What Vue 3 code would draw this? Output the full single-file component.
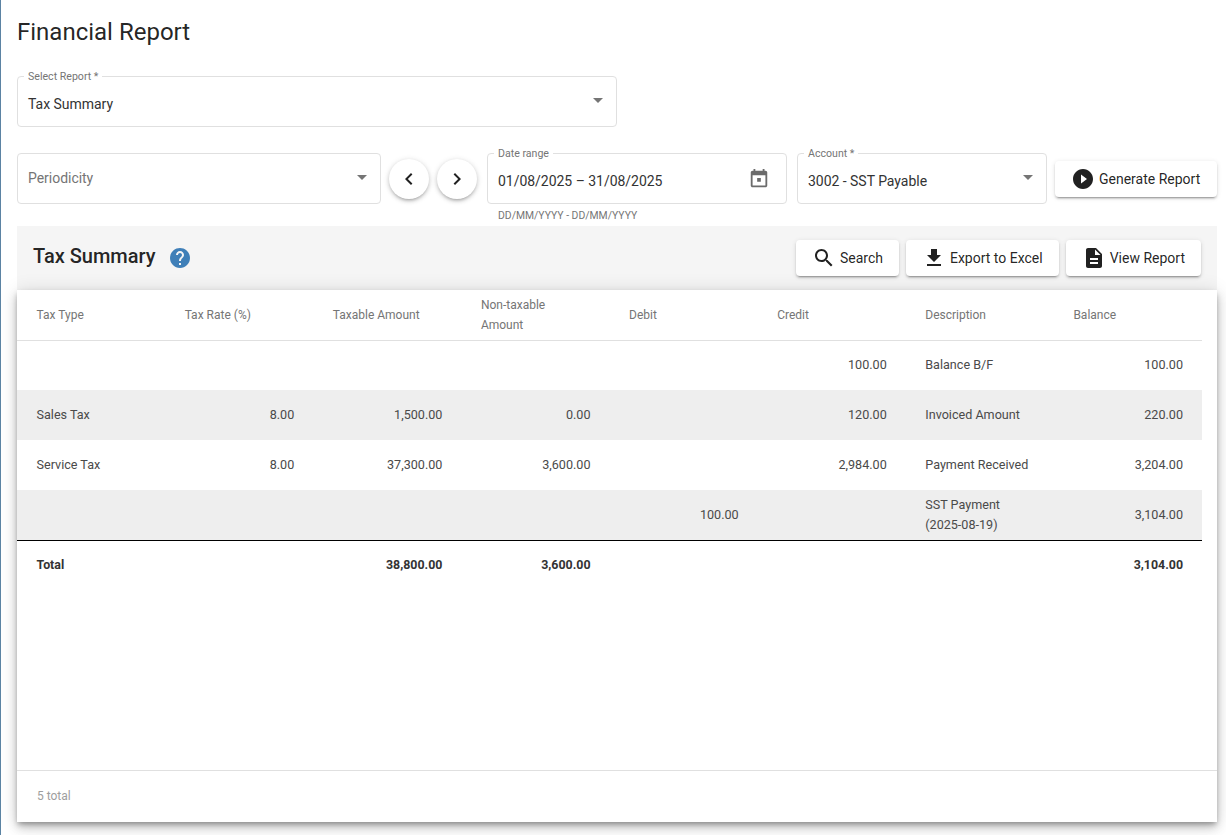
<script setup>
const icons = {
  drop: 'M7 10l5 5 5-5z',
  left: 'M15.41 7.41L14 6l-6 6 6 6 1.41-1.41L10.83 12z',
  right: 'M10 6L8.59 7.41 13.17 12l-4.58 4.59L10 18l6-6z',
  cal: 'M19 3h-1V1h-2v2H8V1H6v2H5c-1.11 0-2 .9-2 2v14c0 1.1.89 2 2 2h14c1.1 0 2-.9 2-2V5c0-1.1-.9-2-2-2zm0 16H5V8h14v11zM10 11h4v4h-4z',
  play: 'M12 2C6.48 2 2 6.48 2 12s4.48 10 10 10 10-4.48 10-10S17.52 2 12 2zm-2 14.5v-9l6 4.5-6 4.5z',
  search: 'M15.5 14h-.79l-.28-.27C15.41 12.59 16 11.11 16 9.5 16 5.91 13.09 3 9.5 3S3 5.91 3 9.5 5.91 16 9.5 16c1.61 0 3.09-.59 4.23-1.57l.27.28v.79l5 4.99L20.49 19l-4.99-5zm-6 0C7.01 14 5 11.99 5 9.5S7.01 5 9.5 5 14 7.01 14 9.5 11.99 14 9.5 14z',
  download: 'M19 9h-4V3H9v6H5l7 7 7-7zM5 18v2h14v-2H5z',
  doc: 'M14 2H6c-1.1 0-1.99.9-1.99 2L4 20c0 1.1.89 2 2 2h12c1.1 0 2-.9 2-2V8l-6-6zm2 16H8v-2h8v2zm0-4H8v-2h8v2zm-3-5V3.5L18.5 9H13z',
  help: 'M12 2C6.48 2 2 6.48 2 12s4.48 10 10 10 10-4.48 10-10S17.52 2 12 2zm1 17h-2v-2h2v2zm2.07-7.75l-.9.92C13.45 12.9 13 13.5 13 15h-2v-.5c0-1.1.45-2.1 1.17-2.83l1.24-1.26c.37-.36.59-.86.59-1.41 0-1.1-.9-2-2-2s-2 .9-2 2H8c0-2.21 1.79-4 4-4s4 1.79 4 4c0 .88-.36 1.68-.93 2.25z'
}
const headers = ['Tax Type', 'Tax Rate (%)', 'Taxable Amount', 'Non-taxable Amount', 'Debit', 'Credit', 'Description', 'Balance']
const rows = [
  ['', '', '', '', '', '100.00', 'Balance B/F', '100.00'],
  ['Sales Tax', '8.00', '1,500.00', '0.00', '', '120.00', 'Invoiced Amount', '220.00'],
  ['Service Tax', '8.00', '37,300.00', '3,600.00', '', '2,984.00', 'Payment Received', '3,204.00'],
  ['', '', '', '', '100.00', '', 'SST Payment (2025-08-19)', '3,104.00']
]
const total = ['Total', '', '38,800.00', '3,600.00', '', '', '', '3,104.00']
const isLeft = (i) => i === 0 || i === 6
</script>

<template>
  <div class="page">
    <h1 class="title">Financial Report</h1>

    <div class="field report">
      <span class="label">Select Report *</span>
      <span class="value">Tax Summary</span>
      <svg class="drop" viewBox="0 0 24 24"><path :d="icons.drop" /></svg>
    </div>

    <div class="filters">
      <div class="field period">
        <span class="value muted">Periodicity</span>
        <svg class="drop" viewBox="0 0 24 24"><path :d="icons.drop" /></svg>
      </div>
      <button class="round"><svg viewBox="0 0 24 24"><path :d="icons.left" /></svg></button>
      <button class="round"><svg viewBox="0 0 24 24"><path :d="icons.right" /></svg></button>
      <div class="date-wrap">
        <div class="field date">
          <span class="label">Date range</span>
          <span class="value spaced">01/08/2025 – 31/08/2025</span>
          <svg class="cal" viewBox="0 0 24 24"><path :d="icons.cal" /></svg>
        </div>
        <div class="hint">DD/MM/YYYY - DD/MM/YYYY</div>
      </div>
      <div class="field account">
        <span class="label">Account *</span>
        <span class="value spaced">3002 - SST Payable</span>
        <svg class="drop" viewBox="0 0 24 24"><path :d="icons.drop" /></svg>
      </div>
      <button class="btn generate">
        <svg viewBox="0 0 24 24"><path :d="icons.play" /></svg>
        Generate Report
      </button>
    </div>

    <section class="panel">
      <div class="panel-head">
        <h2>Tax Summary</h2>
        <svg class="help" viewBox="0 0 24 24"><path :d="icons.help" /></svg>
        <div class="actions">
          <button class="btn"><svg viewBox="0 0 24 24"><path :d="icons.search" /></svg>Search</button>
          <button class="btn"><svg viewBox="0 0 24 24"><path :d="icons.download" /></svg>Export to Excel</button>
          <button class="btn"><svg viewBox="0 0 24 24"><path :d="icons.doc" /></svg>View Report</button>
        </div>
      </div>
      <div class="card">
        <div class="scroll">
          <table>
            <thead>
              <tr><th v-for="h in headers" :key="h">{{ h }}</th></tr>
            </thead>
            <tbody>
              <tr v-for="(r, ri) in rows" :key="ri" :class="{ odd: ri % 2 === 1 }">
                <td v-for="(c, i) in r" :key="i" :class="{ num: !isLeft(i) }">{{ c }}</td>
              </tr>
              <tr class="total">
                <td v-for="(c, i) in total" :key="i" :class="{ num: !isLeft(i) }">{{ c }}</td>
              </tr>
            </tbody>
          </table>
        </div>
        <div class="foot">5 total</div>
      </div>
    </section>
  </div>
</template>

<style>
html, body { margin: 0; background: #fff; overflow: hidden; }
</style>

<style scoped>
.page {
  box-sizing: border-box;
  width: 1226px;
  height: 835px;
  padding: 0 9px 0 16px;
  border-left: 1px solid #5b83a3;
  font-family: Roboto, "Liberation Sans", sans-serif;
  color: rgba(0, 0, 0, 0.87);
  overflow: hidden;
}
.title {
  margin: 0;
  padding-top: 16px;
  height: 76px;
  box-sizing: border-box;
  font-size: 24px;
  line-height: 32px;
  font-weight: 400;
}
.field {
  position: relative;
  box-sizing: border-box;
  height: 51px;
  border: 1px solid #e0e0e0;
  border-radius: 4px;
  display: flex;
  align-items: center;
  padding: 0 10px;
  background: #fff;
}
.report { width: 600px; }
.label {
  position: absolute;
  left: 6px;
  top: -7px;
  padding: 0 4px;
  background: #fff;
  font-size: 10.6px;
  line-height: 13px;
  color: #757575;
}
.value { font-size: 14px; line-height: 20px; padding-top: 5px; color: #333; letter-spacing: -0.03px; }
.spaced { padding-top: 4px; }
.muted { color: #757575; padding-top: 0; padding-bottom: 2px; }
.drop {
  position: absolute;
  right: 6px;
  top: 11px;
  width: 24px;
  height: 24px;
  fill: #757575;
}
.filters {
  display: flex;
  align-items: flex-start;
  margin-top: 26px;
  height: 73px;
}
.period { width: 364px; }
.round {
  width: 40px;
  height: 40px;
  margin: 6px 0 0 8px;
  border: 0;
  border-radius: 50%;
  background: #fff;
  padding: 8px;
  box-shadow: 0 3px 3px -2px rgba(0,0,0,.2), 0 2px 4px 0 rgba(0,0,0,.14), 0 1px 6px 0 rgba(0,0,0,.12);
}
.round svg { display: block; width: 24px; height: 24px; fill: #212121; }
.date-wrap { margin-left: 10px; width: 300px; }
.date { width: 300px; }
.cal {
  position: absolute;
  right: 16px;
  top: 14px;
  width: 22px;
  height: 22px;
  fill: #6b6b6b;
}
.hint {
  margin: 5px 0 0 11px;
  font-size: 10.4px;
  line-height: 14px;
  color: #757575;
}
.account { width: 250px; margin-left: 10px; }
.btn {
  display: inline-flex;
  align-items: center;
  box-sizing: border-box;
  height: 36px;
  padding: 0 16px;
  border: 0;
  border-radius: 4px;
  background: #fff;
  font-family: inherit;
  font-size: 14px;
  letter-spacing: 0;
  white-space: nowrap;
  color: rgba(0, 0, 0, 0.87);
  box-shadow: 0 3px 1px -2px rgba(0,0,0,.2), 0 2px 2px 0 rgba(0,0,0,.14), 0 1px 5px 0 rgba(0,0,0,.12);
}
.btn svg { width: 24px; height: 24px; margin-right: 4px; fill: #212121; }
.generate { margin: 8px 0 0 8px; width: 162px; }
.panel { background: #f5f5f5; width: 1200px; }
.panel-head {
  display: flex;
  align-items: center;
  height: 64px;
  padding: 0 16px;
}
.panel-head h2 {
  margin: 0;
  font-size: 20px;
  line-height: 32px;
  font-weight: 500;
  position: relative;
  top: -2px;
}
.help { width: 24px; height: 24px; margin: 0 0 0 12px; fill: #3f7fb8; }
.actions { margin-left: auto; display: flex; gap: 7px; }
.card {
  height: 532px;
  background: #fff;
  box-shadow: 0 3px 5px -1px rgba(0,0,0,.3), 0 6px 10px 0 rgba(0,0,0,.18), 0 1px 18px 0 rgba(0,0,0,.12);
  display: flex;
  flex-direction: column;
}
.scroll { flex: 1; padding-right: 15px; }
table {
  width: 1185px;
  border-collapse: collapse;
  table-layout: fixed;
  font-size: 12px;
  line-height: 20px;
}
th {
  height: 50px;
  padding: 0 20px 0 19.5px;
  box-sizing: border-box;
  text-align: left;
  font-weight: 400;
  font-size: 12px;
  color: #757575;
  border-bottom: 1px solid #e0e0e0;
}
td {
  height: 50px;
  padding: 0 19px 0 19.5px;
  box-sizing: border-box;
  font-size: 12.6px;
  color: #4a4a4a;
}
td.num { text-align: right; }
.odd td { background: #eeeeee; }
.total td {
  font-weight: 700;
  font-size: 12.4px;
  color: #333;
  border-top: 1px solid #000;
}
.foot {
  height: 52px;
  box-sizing: border-box;
  border-top: 1px solid #e0e0e0;
  padding: 16px 20px 0;
  font-size: 12px;
  line-height: 18px;
  color: #9e9e9e;
}
</style>
